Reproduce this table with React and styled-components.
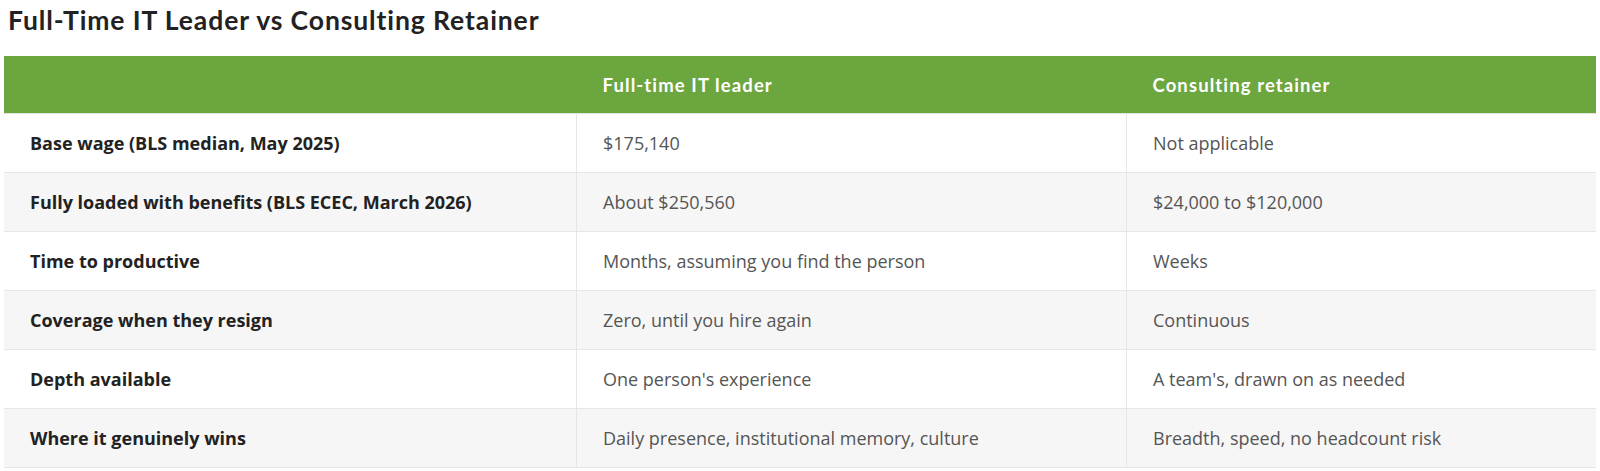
import React from 'react';
import styled, { createGlobalStyle } from 'styled-components';

const GlobalStyle = createGlobalStyle`
  body {
    margin: 0;
    background: #fff;
    font-family: "Open Sans", "Liberation Sans", sans-serif;
  }
`;

const Page = styled.div`
  padding: 4px 4px 3px 4px;
`;

const Title = styled.h2`
  margin: 0 0 20px 4px;
  font-family: Lato, "Open Sans", sans-serif;
  font-weight: 700;
  font-size: 26.5px;
  line-height: 32px;
  color: #222;
  letter-spacing: 0.9px;
`;

const Table = styled.table`
  width: 100%;
  border-collapse: collapse;
  font-size: 18px;
`;

const HeadCell = styled.th`
  background: #6ca63f;
  color: #fff;
  text-align: left;
  font-family: Lato, "Open Sans", sans-serif;
  font-weight: 700;
  font-size: 18.5px;
  letter-spacing: 1.1px;
  height: 57px;
  padding: 0 26px;
  border-bottom: 1px solid #e2e2e2;
  width: ${(p) => p.w || 'auto'};
`;

const Row = styled.tr`
  background: ${(p) => (p.odd ? '#f6f6f6' : '#fff')};
`;

const Cell = styled.td`
  height: 58px;
  padding: 0 26px;
  border-bottom: 1px solid #e6e6e6;
  border-left: ${(p) => (p.first ? 'none' : '1px solid #e6e6e6')};
  color: ${(p) => (p.first ? '#222' : '#555')};
  font-weight: ${(p) => (p.first ? 700 : 400)};
  width: ${(p) => p.w || 'auto'};
`;

const rows = [
  ['Base wage (BLS median, May 2025)', '$175,140', 'Not applicable'],
  ['Fully loaded with benefits (BLS ECEC, March 2026)', 'About $250,560', '$24,000 to $120,000'],
  ['Time to productive', 'Months, assuming you find the person', 'Weeks'],
  ['Coverage when they resign', 'Zero, until you hire again', 'Continuous'],
  ['Depth available', "One person's experience", "A team's, drawn on as needed"],
  ['Where it genuinely wins', 'Daily presence, institutional memory, culture', 'Breadth, speed, no headcount risk'],
];

export default function App() {
  return (
    <Page>
      <GlobalStyle />
      <Title>Full-Time IT Leader vs Consulting Retainer</Title>
      <Table>
        <thead>
          <tr>
            <HeadCell w="520px" />
            <HeadCell w="497px">Full-time IT leader</HeadCell>
            <HeadCell>Consulting retainer</HeadCell>
          </tr>
        </thead>
        <tbody>
          {rows.map((r, i) => (
            <Row key={r[0]} odd={i % 2 === 1}>
              <Cell first w="520px">{r[0]}</Cell>
              <Cell w="497px">{r[1]}</Cell>
              <Cell>{r[2]}</Cell>
            </Row>
          ))}
        </tbody>
      </Table>
    </Page>
  );
}
